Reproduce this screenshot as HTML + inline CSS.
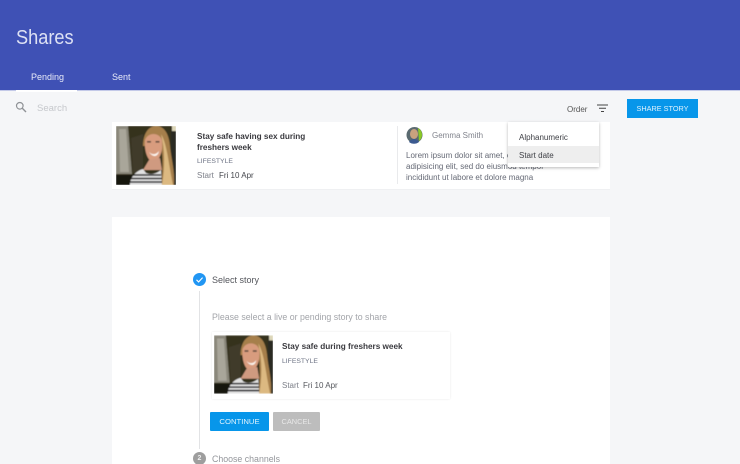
<!DOCTYPE html>
<html><head><meta charset="utf-8">
<style>
*{box-sizing:border-box;margin:0;padding:0}
html,body{width:740px;height:464px;overflow:hidden;background:#f5f6f8;font-family:"Liberation Sans",sans-serif;position:relative}
.a{position:absolute;white-space:nowrap}
.card{background:#fff;position:absolute}
</style></head><body>
<svg width="0" height="0" style="position:absolute"><defs>
<filter id="b" x="-10%" y="-10%" width="120%" height="120%"><feGaussianBlur stdDeviation="0.6"/></filter>
<symbol id="photo" viewBox="0 0 60 59"><g filter="url(#b)">
<rect width="60" height="59" fill="#35301f"/>
<path d="M0 0H12L16 48H0Z" fill="#8a877a"/>
<path d="M3 3H10L13 46H4Z" fill="#a9a69a"/>
<path d="M15 12L27 8V44L17 47Z" fill="#3f3a2a"/>
<rect x="0" y="49" width="18" height="10" fill="#15140f"/>
<path d="M55 0H60V59H55Z" fill="#2b2a22"/>
<path d="M56 0h4v5h-4z" fill="#dcd6b8"/>
<path d="M27 20C27 7 33 0 40 0C49 0 53 9 54 20C55 32 59 44 58 59H45C47 45 47 30 45 20Z" fill="#a67f4c"/>
<path d="M45 8C51 18 52 34 57 59H46C49 42 49 24 45 8Z" fill="#dcb981"/>
<path d="M29 14C32 6 43 6 46 14C47 24 45 33 38 36C32 36 28 26 29 14Z" fill="#d89c7e"/>
<path d="M33 26C36 29 40 29 43 25C42 31 37 32 33 26Z" fill="#fbf4ee"/>
<rect x="31" y="15" width="4" height="1.600" fill="#5d4a3c"/><rect x="39.500" y="15" width="4" height="1.600" fill="#5d4a3c"/>
<path d="M33 34L44 32L46 44L27 44Z" fill="#cf9a80"/>
<path d="M14 59C14 51 20 45 27 43L30 47C35 49 40 48 45 44L46 59Z" fill="#e2e2e2"/>
<path d="M17 49H45M15 52.500H46M14 56H46" stroke="#1d1d20" stroke-width="1.600"/>
</g></symbol>
</defs></svg>

<div class="a" style="left:0;top:0;width:740px;height:91px;background:#3f51b5;border-bottom:1px solid #c3c9e8"></div>
<div class="a" style="left:16px;top:25px;font-size:18.200px;line-height:22px;color:#dde1f4;transform:scaleY(1.12);transform-origin:left top">Shares</div>
<div class="a" style="left:31px;top:72px;font-size:9px;color:#e8ebf8">Pending</div>
<div class="a" style="left:112px;top:72px;font-size:9px;color:#e8ebf8">Sent</div>
<div class="a" style="left:16px;top:90px;width:61px;height:2px;background:#fff"></div>

<svg class="a" style="left:15px;top:101px" width="12" height="12" viewBox="0 0 12 12"><circle cx="4.800" cy="4.800" r="3.300" fill="none" stroke="#8f9296" stroke-width="1.200"/><path d="M7.300 7.300L11 11" stroke="#8f9296" stroke-width="1.400"/></svg>
<div class="a" style="left:37px;top:103px;font-size:9.500px;color:#c6c8cc">Search</div>

<div class="a" style="left:567px;top:105px;font-size:8px;color:#555">Order</div>
<svg class="a" style="left:597px;top:104px" width="11" height="9" viewBox="0 0 11 9"><path d="M0 1h11M2 4.200h7M4 7.500h3" stroke="#444" stroke-width="1"/></svg>
<div class="a" style="left:627px;top:99px;width:71px;height:19px;background:#0796ea;color:#dff2fd;font-size:7.300px;line-height:20px;text-align:center">SHARE STORY</div>

<div class="card" style="left:112px;top:122px;width:498px;height:67px;box-shadow:0 1px 0 rgba(0,0,0,.025)"></div>
<svg class="a" style="left:116px;top:126px" width="60" height="59"><use href="#photo"/></svg>
<div class="a" style="left:197px;top:132px;font-size:8.200px;line-height:10.500px;font-weight:bold;color:#3a3a3f">Stay safe having sex during<br>freshers week</div>
<div class="a" style="left:197px;top:158px;font-size:6.800px;color:#6d7384">LIFESTYLE</div>
<div class="a" style="left:197px;top:171px;font-size:8px;color:#7c7f88">Start</div>
<div class="a" style="left:219px;top:171px;font-size:8px;color:#44464c">Fri 10 Apr</div>

<div class="a" style="left:397px;top:126px;width:1px;height:58px;background:#e9eaec"></div>
<svg class="a" style="left:406px;top:126px" width="17" height="18" viewBox="0 0 17 18"><circle cx="8.500" cy="9" r="8" fill="#5a6a70"/><path d="M12 2a8 8 0 0 1 4 7a8 8 0 0 1-3 6z" fill="#8ac926"/><ellipse cx="8" cy="8" rx="4" ry="5" fill="#c9a27e"/><path d="M3 16c2-4 8-4 10 0a8 8 0 0 1-10 0z" fill="#3c5a90"/></svg>
<div class="a" style="left:432px;top:131px;font-size:8px;color:#80838c">Gemma Smith</div>
<div class="a" style="left:406px;top:150px;font-size:8px;line-height:11px;color:#656975">Lorem ipsum dolor sit amet, consectetur<br>adipisicing elit, sed do eiusmod tempor<br>incididunt ut labore et dolore magna</div>

<div class="card" style="left:508px;top:122px;width:91px;height:45px;box-shadow:0 1px 3px rgba(0,0,0,.28)"></div>
<div class="a" style="left:508px;top:146px;width:91px;height:17px;background:#eeeeee"></div>
<div class="a" style="left:519px;top:133px;font-size:8px;color:#3f4046">Alphanumeric</div>
<div class="a" style="left:519px;top:151px;font-size:8px;color:#3f4046">Start date</div>

<div class="card" style="left:112px;top:217px;width:498px;height:247px"></div>
<svg class="a" style="left:193px;top:273px" width="13" height="13" viewBox="0 0 13 13"><circle cx="6.500" cy="6.500" r="6.500" fill="#2196f3"/><path d="M3.500 6.800l2.100 2.100 4-4.300" fill="none" stroke="#fff" stroke-width="1.100"/></svg>
<div class="a" style="left:212px;top:275px;font-size:9px;color:#54565c">Select story</div>
<div class="a" style="left:199px;top:291px;width:1px;height:158px;background:#e2e3e5"></div>
<div class="a" style="left:212px;top:312px;font-size:8.800px;color:#a3a5aa">Please select a live or pending story to share</div>

<div class="card" style="left:212px;top:332px;width:238px;height:67px;box-shadow:0 0 2px rgba(0,0,0,.1)"></div>
<svg class="a" style="left:214px;top:335px" width="59" height="59"><use href="#photo"/></svg>
<div class="a" style="left:282px;top:342px;font-size:8.200px;font-weight:bold;color:#3a3a3f">Stay safe during freshers week</div>
<div class="a" style="left:282px;top:358px;font-size:6.800px;color:#6d7384">LIFESTYLE</div>
<div class="a" style="left:282px;top:381px;font-size:8px;color:#7c7f88">Start</div>
<div class="a" style="left:303px;top:381px;font-size:8px;color:#55575d">Fri 10 Apr</div>

<div class="a" style="left:210px;top:412px;width:59px;height:19px;background:#0796ea;color:#dff2fd;font-size:7.700px;line-height:19px;text-align:center;border-radius:1px">CONTINUE</div>
<div class="a" style="left:273px;top:412px;width:47px;height:19px;background:#bdbdbd;color:#e8e8e8;font-size:7.400px;line-height:19px;text-align:center;border-radius:1px">CANCEL</div>

<div class="a" style="left:193px;top:452px;width:13px;height:13px;border-radius:50%;background:#9e9e9e;color:#eee;font-size:7px;line-height:13px;text-align:center;font-weight:bold">2</div>
<div class="a" style="left:212px;top:454px;font-size:8.800px;color:#94969b">Choose channels</div>
</body></html>
